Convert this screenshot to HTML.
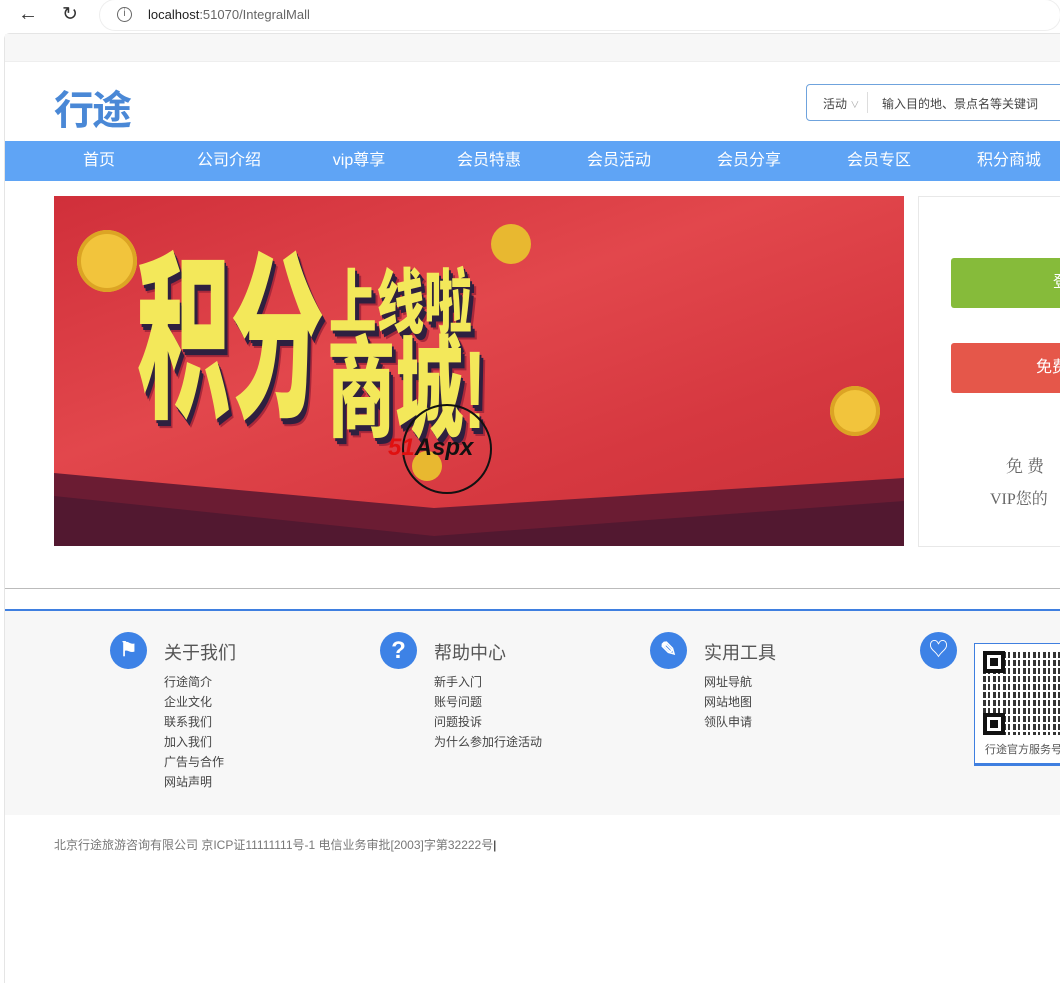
<!DOCTYPE html>
<html><head><meta charset="utf-8"><style>
*{margin:0;padding:0;box-sizing:border-box}
body{width:1060px;height:976px;background:#fff;font-family:"Liberation Sans","Noto Sans CJK SC",sans-serif;position:relative;overflow:hidden;color:#333}
.a{position:absolute}
.nav span{position:absolute;top:0;line-height:40px;color:#fff;font-size:16px;width:110px;text-align:center}
.ft{font-size:12px;color:#444;line-height:20px}
.ic{width:37px;height:37px;border-radius:50%;background:#3d82e6;color:#fff;text-align:center;line-height:37px;font-weight:bold;font-size:24px}
.h{font-size:18px;color:#555}
.y{position:absolute;font-weight:900;color:#f3e85a;text-shadow:3px 3px 0 #2e2040,6px 6px 0 #2e2040,9px 8px 0 #a8283a;transform-origin:0 0;white-space:nowrap}
</style></head><body>
<div class="a" style="left:0;top:0;width:1060px;height:32px;background:#fff"></div>
<div class="a" style="left:18px;top:3px;font-size:20px;color:#333">←</div>
<div class="a" style="left:62px;top:3px;font-size:19px;color:#333">↻</div>
<div class="a" style="left:100px;top:0;width:960px;height:30px;background:#fff;border-radius:15px;box-shadow:0 0 0 1px #eee"></div>
<div class="a" style="left:117px;top:7px;width:15px;height:15px;border:1.5px solid #666;border-radius:50%;font-size:10px;text-align:center;line-height:12px;color:#666">i</div>
<div class="a" style="left:148px;top:7px;font-size:13px;color:#222">localhost<span style="color:#666">:51070/IntegralMall</span></div>
<div class="a" style="left:4px;top:33px;width:1060px;height:950px;border-left:1px solid #e5e5e5;border-top:1px solid #e5e5e5;border-radius:6px 0 0 0"></div>
<div class="a" style="left:5px;top:34px;width:1055px;height:28px;background:#f7f7f7;border-bottom:1px solid #eee"></div>
<div class="a" style="left:54px;top:78px;font-size:40px;font-weight:bold;color:#4a88d6;letter-spacing:-2px">行途</div>
<div class="a" style="left:806px;top:84px;width:260px;height:37px;border:1px solid #6fa3dd;border-radius:4px"></div>
<div class="a" style="left:823px;top:95px;font-size:12px;color:#444">活动 <span style="color:#aaa;font-size:9px">∨</span></div>
<div class="a" style="left:867px;top:92px;width:1px;height:21px;background:#ddd"></div>
<div class="a" style="left:882px;top:95px;font-size:12px;color:#444">输入目的地、景点名等关键词</div>
<div class="a nav" style="left:5px;top:141px;width:1055px;height:40px;background:#5fa4f5">
<span style="left:39px">首页</span><span style="left:169px">公司介绍</span><span style="left:299px">vip尊享</span><span style="left:429px">会员特惠</span><span style="left:559px">会员活动</span><span style="left:689px">会员分享</span><span style="left:819px">会员专区</span><span style="left:949px">积分商城</span>
</div>
<div class="a" style="left:54px;top:196px;width:850px;height:350px;background:#d9383e;overflow:hidden">
<div class="a" style="left:0;top:0;width:850px;height:350px;background:linear-gradient(160deg,#d02f3a 0%,#e2474c 40%,#d63840 70%,#c83038 100%)"></div>
<div class="a" style="left:0;top:0;width:850px;height:350px;background:#6b1c33;clip-path:polygon(0 277px,380px 312px,850px 282px,850px 350px,0 350px)"></div>
<div class="a" style="left:0;top:0;width:850px;height:350px;background:#521830;clip-path:polygon(0 300px,380px 340px,850px 305px,850px 350px,0 350px)"></div>
<div class="a" style="left:23px;top:34px;width:60px;height:62px;border-radius:50%;background:#f2c43c;box-shadow:inset 0 0 0 4px #dca424"></div>
<div class="a" style="left:776px;top:190px;width:50px;height:50px;border-radius:50%;background:#f2c43c;box-shadow:inset 0 0 0 4px #dca424"></div>
<div class="a" style="left:437px;top:28px;width:40px;height:40px;border-radius:50%;background:#e8b830"></div>
<div class="a" style="left:358px;top:255px;width:30px;height:30px;border-radius:50%;background:#e8b830"></div>
<div class="y" style="left:83px;top:56px;font-size:180px;line-height:180px;transform:scaleX(.52)">积分</div>
<div class="y" style="left:275px;top:72px;font-size:70px;line-height:70px;transform:scaleX(.68)">上线啦</div>
<div class="y" style="left:273px;top:140px;font-size:110px;line-height:110px;transform:scaleX(.62)">商城!</div>
<div class="a" style="left:348px;top:208px;width:90px;height:90px;border-radius:50%;border:2px solid #111"></div>
<div class="a" style="left:334px;top:238px;font-size:24px;font-weight:bold;font-style:italic;color:#e01010">51<span style="color:#111">Aspx</span></div>
</div>
<div class="a" style="left:918px;top:196px;width:150px;height:351px;border:1px solid #e8e8e8"></div>
<div class="a" style="left:951px;top:258px;width:120px;height:50px;background:#86bb3a;border-radius:3px;color:#fff;font-size:16px;line-height:50px;padding-left:102px">登</div>
<div class="a" style="left:951px;top:343px;width:120px;height:50px;background:#e5574a;border-radius:3px;color:#fff;font-size:16px;line-height:50px;padding-left:85px">免费</div>
<div class="a" style="left:1006px;top:452px;font-size:17px;color:#666;font-family:'Liberation Serif','Noto Serif CJK SC',serif;letter-spacing:4px">免费</div>
<div class="a" style="left:990px;top:486px;font-size:16px;color:#666;font-family:'Liberation Serif','Noto Serif CJK SC',serif">VIP您的</div>
<div class="a" style="left:5px;top:588px;width:1055px;height:1px;background:#bbb"></div>
<div class="a" style="left:5px;top:609px;width:1055px;height:2px;background:#3f7fe0"></div>
<div class="a" style="left:5px;top:611px;width:1055px;height:204px;background:#f7f7f7"></div>
<div class="a ic" style="left:110px;top:632px;font-size:20px">⚑</div>
<div class="a h" style="left:164px;top:639px">关于我们</div>
<div class="a ft" style="left:164px;top:672px">行途简介<br>企业文化<br>联系我们<br>加入我们<br>广告与合作<br>网站声明</div>
<div class="a ic" style="left:380px;top:632px">?</div>
<div class="a h" style="left:434px;top:639px">帮助中心</div>
<div class="a ft" style="left:434px;top:672px">新手入门<br>账号问题<br>问题投诉<br>为什么参加行途活动</div>
<div class="a ic" style="left:650px;top:632px;font-size:20px">✎</div>
<div class="a h" style="left:704px;top:639px">实用工具</div>
<div class="a ft" style="left:704px;top:672px">网址导航<br>网站地图<br>领队申请</div>
<div class="a ic" style="left:920px;top:632px;font-size:20px">♡</div>
<div class="a" style="left:974px;top:643px;width:90px;height:123px;background:#fff;border:1px solid #3f7fe0;border-bottom:3px solid #3f7fe0"></div>
<div class="a" style="left:983px;top:651px;width:80px;height:84px;background:repeating-linear-gradient(90deg,#111 0 3px,#fff 3px 5px,#111 5px 7px,#fff 7px 10px),#111;opacity:.85"></div>
<div class="a" style="left:983px;top:651px;width:80px;height:84px;background:repeating-linear-gradient(0deg,transparent 0 3px,#fff 3px 5px,transparent 5px 8px)"></div>
<div class="a" style="left:983px;top:651px;width:22px;height:22px;border:4px solid #111;background:#fff;box-shadow:inset 0 0 0 3px #fff,inset 0 0 0 10px #111"></div>
<div class="a" style="left:983px;top:713px;width:22px;height:22px;border:4px solid #111;background:#fff;box-shadow:inset 0 0 0 3px #fff,inset 0 0 0 10px #111"></div>
<div class="a" style="left:985px;top:741px;font-size:11px;color:#555;white-space:nowrap">行途官方服务号</div>
<div class="a" style="left:54px;top:836px;font-size:12px;color:#777">北京行途旅游咨询有限公司 京ICP证11111111号-1 电信业务审批[2003]字第32222号<span style="color:#000">|</span></div>
</body></html>
